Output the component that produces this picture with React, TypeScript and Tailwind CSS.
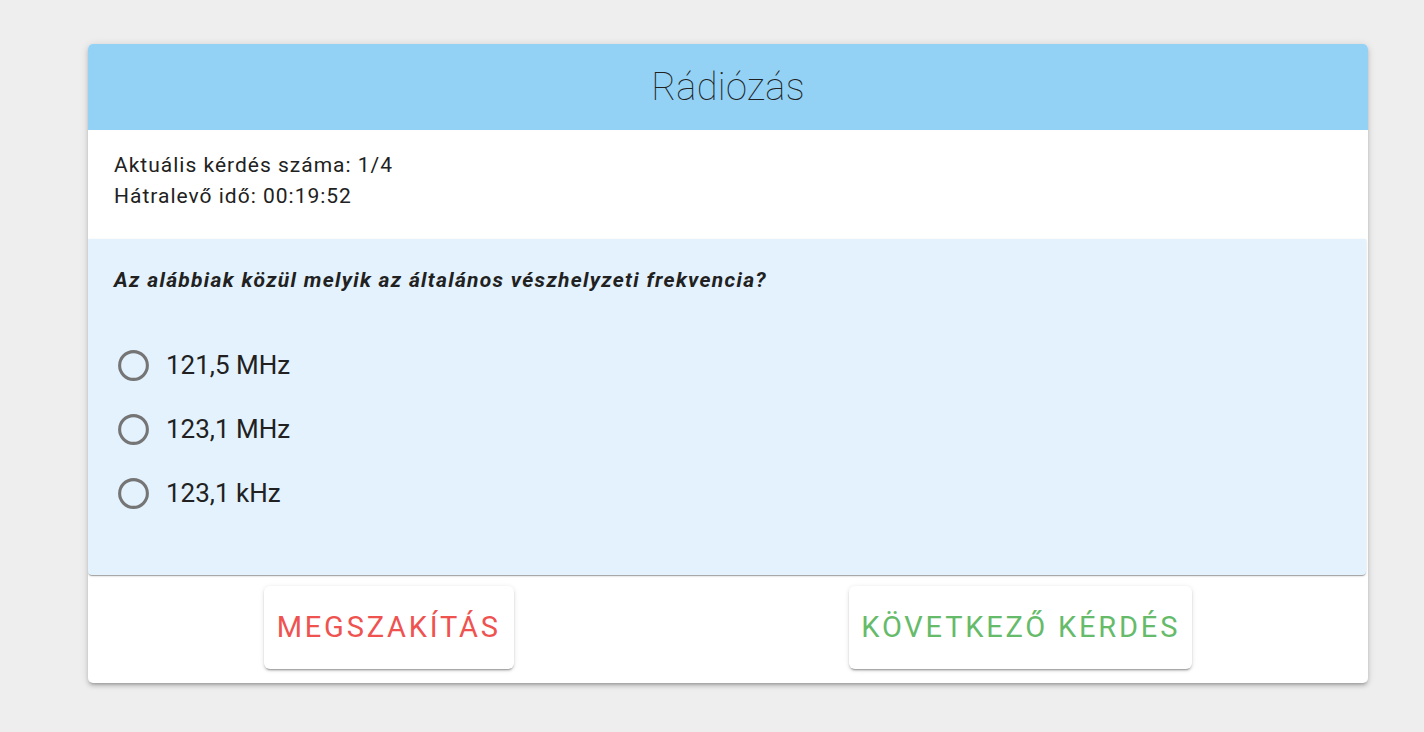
import React from "react";

const options = ["121,5 MHz", "123,1 MHz", "123,1 kHz"];

function RadioBlank() {
  return (
    <svg width="37" height="37" viewBox="0 0 24 24" className="shrink-0">
      <path
        fill="#757575"
        d="M12,20A8,8 0 0,1 4,12A8,8 0 0,1 12,4A8,8 0 0,1 20,12A8,8 0 0,1 12,20M12,2A10,10 0 0,0 2,12A10,10 0 0,0 12,22A10,10 0 0,0 22,12A10,10 0 0,0 12,2Z"
      />
    </svg>
  );
}

const raised =
  "shadow-[0_3px_1px_-2px_rgba(0,0,0,0.2),0_2px_2px_0_rgba(0,0,0,0.14),0_1px_5px_0_rgba(0,0,0,0.12)]";

export default function App() {
  return (
    <div
      className="min-h-[732px] w-full bg-[#eeeeee] pt-[44px] pl-[88px]"
      style={{ fontFamily: "Roboto, 'Noto Sans', sans-serif" }}
    >
      <div className="w-[1280px] rounded-[5px] bg-white shadow-[0_3px_3px_-2px_rgba(0,0,0,0.2),0_3px_4px_0_rgba(0,0,0,0.14),0_1px_8px_0_rgba(0,0,0,0.12)] overflow-hidden">
        <div className="h-[86px] bg-[#93d2f5] flex items-center justify-center">
          <h1 className="text-[38px] font-thin text-[#212121] tracking-[0.3px] mt-[1px]">Rádiózás</h1>
        </div>
        <div className="px-[26px] pt-[20px] pb-[27px] text-[21px] leading-[31px] tracking-[1px] text-[#212121]">
          <div>Aktuális kérdés száma: 1/4</div>
          <div>Hátralevő idő: 00:19:52</div>
        </div>
        <div className="w-[1278px] h-[336px] rounded-b-[4px] bg-[#e3f2fd] shadow-[0_2px_1px_-1px_rgba(0,0,0,0.2),0_1px_1px_0_rgba(0,0,0,0.14),0_1px_3px_0_rgba(0,0,0,0.12)] px-[26px] pt-[26px]">
          <p className="text-[21px] font-bold italic tracking-[1.3px] text-[#212121] leading-[30px]">
            Az alábbiak közül melyik az általános vészhelyzeti frekvencia?
          </p>
          <div className="mt-[52px] flex flex-col gap-[27px] pl-[1px]">
            {options.map((o) => (
              <label key={o} className="flex items-center gap-[14px] h-[37px]">
                <RadioBlank />
                <span className="text-[26px] text-[#212121]">{o}</span>
              </label>
            ))}
          </div>
        </div>
        <div className="flex justify-around px-2 pt-[11px] pb-[14px]">
          <button className={`h-[83px] w-[250px] rounded-[6px] bg-white text-[29px] font-normal tracking-[2.8px] text-[#ef5350] ${raised}`}>
            MEGSZAKÍTÁS
          </button>
          <button className={`h-[83px] w-[343px] rounded-[6px] bg-white text-[29px] font-normal tracking-[2.8px] text-[#66bb6a] ${raised}`}>
            KÖVETKEZŐ KÉRDÉS
          </button>
        </div>
      </div>
    </div>
  );
}
